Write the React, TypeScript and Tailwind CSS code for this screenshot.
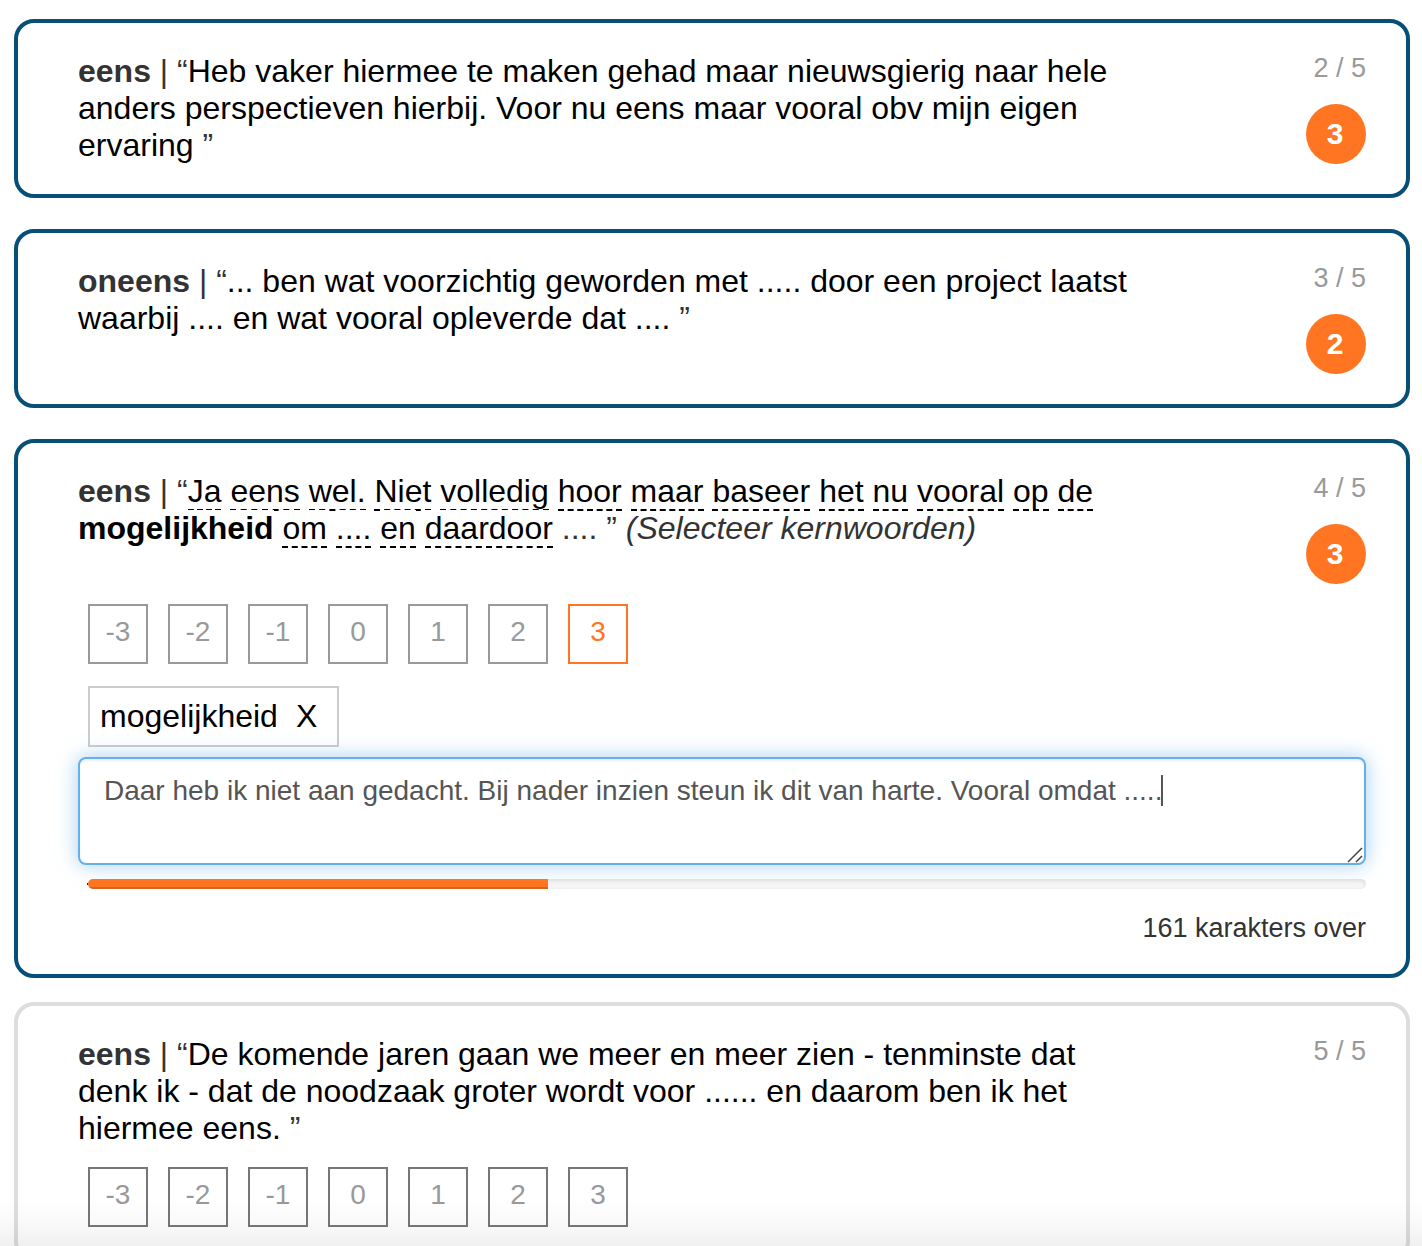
import { useState } from "react";

interface StatementCardProps {
  opinion: string;
  position: string;
  score?: number;
  saved?: boolean;
  quote: React.ReactNode;
  hint?: string;
  children?: React.ReactNode;
}

const ratings = [-3, -2, -1, 0, 1, 2, 3];
const words = "Ja eens wel. Niet volledig hoor maar baseer het nu vooral op de mogelijkheid om .... en daardoor".split(" ");

function StatementCard({ opinion, position, score, saved = true, quote, hint, children }: StatementCardProps) {
  return (
    <section className={`rounded-[20px] border-4 py-[30px] pr-10 pl-[60px] ${saved ? "border-[#074f76]" : "border-[#ddd]"}`}>
      <div className="flex items-start justify-between">
        <p className="w-10/12 text-[32px] leading-[37px]">
          <strong>{opinion}</strong> | “{quote} ”{hint && <em> {hint}</em>}
        </p>
        <div className="flex flex-col items-end gap-5">
          <span className="text-[27px] leading-[31px] text-[#999]">{position}</span>
          {score !== undefined && (
            <span className="flex size-[60px] items-center justify-center rounded-full bg-[#ff7521] pr-0.5 text-[30px] leading-9 font-bold text-white">
              {score}
            </span>
          )}
        </div>
      </div>
      {children}
    </section>
  );
}

function RatingButtons({ dark, initial }: { dark?: boolean; initial?: number }) {
  const [selected, setSelected] = useState(initial);

  return (
    <div className="mt-5 ml-2.5 flex gap-5">
      {ratings.map((value) => (
        <button
          key={value}
          type="button"
          aria-pressed={selected === value}
          onClick={() => setSelected(value)}
          className={`size-[60px] border-2 pb-1 text-[28px] leading-8 ${
            selected === value ? "border-[#ff7521] text-[#ff7521]" : dark ? "border-[#777] text-[#999]" : "border-[#999] text-[#999]"
          }`}
        >
          {value}
        </button>
      ))}
    </div>
  );
}

export default function App() {
  const [keyword, setKeyword] = useState("mogelijkheid");
  const [comment, setComment] = useState("Daar heb ik niet aan gedacht. Bij nader inzien steun ik dit van harte. Vooral omdat .....");
  const [edited, setEdited] = useState(false);

  return (
    <main className="relative h-screen overflow-hidden bg-white pt-[19px] pr-3 pl-3.5 font-['Liberation_Sans',Arial,sans-serif] text-[#333]">
      <div className="flex flex-col gap-[31px]">
        <StatementCard
          opinion="eens"
          position="2 / 5"
          score={3}
          quote={
            <span className="text-black">
              Heb vaker hiermee te maken gehad maar nieuwsgierig naar hele anders perspectieven hierbij. Voor nu eens maar vooral obv mijn eigen
              ervaring
            </span>
          }
        />
        <StatementCard
          opinion="oneens"
          position="3 / 5"
          score={2}
          quote={
            <span className="text-black">
              ... ben wat voorzichtig geworden met ..... door een project laatst waarbij .... en wat vooral opleverde dat ....
            </span>
          }
        />
        <StatementCard
          opinion="eens"
          position="4 / 5"
          score={3}
          hint="(Selecteer kernwoorden)"
          quote={
            <>
              {words.map((word, index) => (
                <span key={index}>
                  <a
                    href="#"
                    onClick={(e) => {
                      e.preventDefault();
                      setKeyword(word);
                    }}
                    className={`bg-white text-black ${word === keyword ? "font-bold" : "border-b-2 border-dashed border-black"}`}
                  >
                    {word}
                  </a>{" "}
                </span>
              ))}
              ....
            </>
          }
        >
          <RatingButtons initial={3} />
          {keyword && (
            <button
              type="button"
              onClick={() => setKeyword("")}
              className="mt-[22px] ml-2.5 flex gap-[18px] border-2 border-[#ccc] py-2.5 pr-5 pl-2.5 text-[32px] leading-[37px] text-black"
            >
              <span>{keyword}</span>
              <span>X</span>
            </button>
          )}

          {/* Comment field */}
          <div className="relative mt-2.5">
            <textarea
              aria-label="Toelichting"
              value={comment}
              onChange={(e) => {
                setComment(e.target.value);
                setEdited(true);
              }}
              className="block h-[108px] w-full resize-none rounded-lg border-2 border-[#66afe9] bg-white px-6 py-4 text-[28px] leading-8 text-[#555] shadow-[inset_0_2px_2px_rgba(0,0,0,0.075),0_0_20px_rgba(102,175,233,0.6)] outline-none"
            />
            {!edited && <span className="pointer-events-none absolute top-[18px] left-[1083px] h-[31px] w-0.5 bg-[#555]" />}
            <svg className="pointer-events-none absolute right-[3px] bottom-0.5 size-4" viewBox="0 0 16 16" fill="none" stroke="#444" strokeWidth="1.5">
              <path d="M1 15 15 1M9 15l6-6" />
            </svg>
          </div>

          {/* Characters used */}
          <div className="relative mt-3.5 ml-2.5">
            <span className="absolute top-1 -left-px size-0.5 bg-[#222]" />
            <div className="relative h-2.5 overflow-hidden rounded-[5px] bg-[#f5f5f5] shadow-[inset_0_2px_4px_rgba(0,0,0,0.1)]">
              <div className="h-full w-[36%] bg-[#ff7521] shadow-[inset_0_-2px_0_rgba(0,0,0,0.15)]" />
            </div>
          </div>
          <p className="mt-6 text-right text-[27px] leading-[31px]">161 karakters over</p>
        </StatementCard>
      </div>
      <div className="mt-6">
        <StatementCard
          opinion="eens"
          position="5 / 5"
          saved={false}
          quote={
            <span className="text-black">
              De komende jaren gaan we meer en meer zien - tenminste dat denk ik - dat de noodzaak groter wordt voor ...... en daarom ben ik het
              hiermee eens.
            </span>
          }
        >
          <RatingButtons dark />
        </StatementCard>
      </div>
      <div className="pointer-events-none absolute inset-x-0 bottom-0 h-12 bg-linear-to-t from-black/6 via-black/2 to-transparent" />
    </main>
  );
}
